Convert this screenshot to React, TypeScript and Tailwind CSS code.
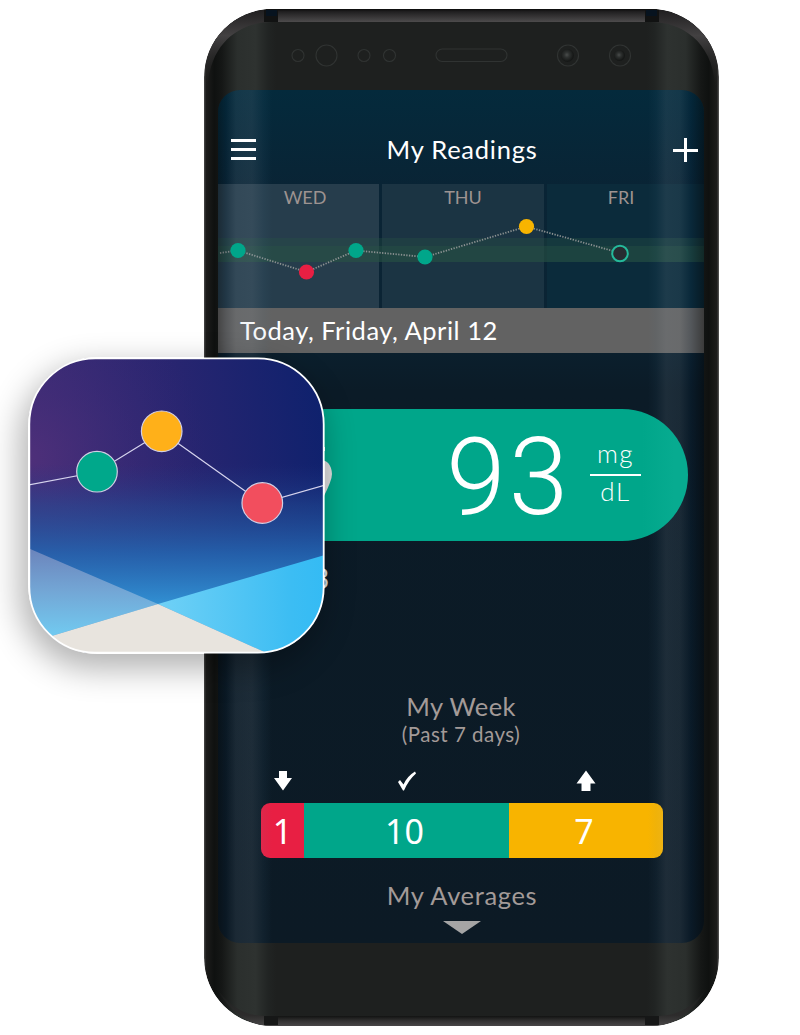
import React from "react";

const dots = [
  { x: 20, y: 66.5, fill: "#00a68a" },
  { x: 88.5, y: 88, fill: "#e81f43" },
  { x: 138, y: 66.5, fill: "#00a68a" },
  { x: 207, y: 73, fill: "#00a68a" },
  { x: 308.5, y: 42.5, fill: "#f8b400" },
];

function PhoneBody() {
  return (
    <svg className="absolute inset-0" width="515" height="1017" viewBox="0 0 515 1017" aria-hidden="true">
      <defs>
        <linearGradient id="side" x1="0" x2="1" y1="0" y2="0">
          <stop offset="0" stopColor="#4b4b4b" />
          <stop offset="0.004" stopColor="#1c1c1b" />
          <stop offset="0.02" stopColor="#0f1110" />
          <stop offset="0.035" stopColor="#151716" />
          <stop offset="0.065" stopColor="#2b2f2d" />
          <stop offset="0.1" stopColor="#2e3230" />
          <stop offset="0.125" stopColor="#212423" />
          <stop offset="0.14" stopColor="#1e201f" />
          <stop offset="0.86" stopColor="#1e201f" />
          <stop offset="0.875" stopColor="#212423" />
          <stop offset="0.9" stopColor="#2e3230" />
          <stop offset="0.935" stopColor="#2b2f2d" />
          <stop offset="0.965" stopColor="#151716" />
          <stop offset="0.98" stopColor="#0f1110" />
          <stop offset="0.996" stopColor="#1c1c1b" />
          <stop offset="1" stopColor="#5b5b5b" />
        </linearGradient>
        <linearGradient id="topEdge" x1="0" x2="0" y1="0" y2="1">
          <stop offset="0" stopColor="#0b0b0b" />
          <stop offset="0.2" stopColor="#201f20" />
          <stop offset="1" stopColor="#4d4b4c" />
        </linearGradient>
        <linearGradient id="cornerFade" x1="0" x2="0" y1="0" y2="1">
          <stop offset="0" stopColor="#1f1e1f" />
          <stop offset="0.35" stopColor="#434142" />
          <stop offset="1" stopColor="#2a2929" stopOpacity="0" />
        </linearGradient>
        <linearGradient id="bottomEdge" x1="0" x2="0" y1="0" y2="1">
          <stop offset="0" stopColor="#121312" />
          <stop offset="0.5" stopColor="#333232" />
          <stop offset="1" stopColor="#484647" />
        </linearGradient>
        <linearGradient id="bottomCorner" x1="0" x2="0" y1="0" y2="1">
          <stop offset="0" stopColor="#1c1c1c" stopOpacity="0" />
          <stop offset="0.75" stopColor="#2d2c2c" />
          <stop offset="1" stopColor="#484647" />
        </linearGradient>
        <radialGradient id="lens" cx="0.45" cy="0.45" r="0.5">
          <stop offset="0" stopColor="#4a4d4c" />
          <stop offset="0.4" stopColor="#2e3130" />
          <stop offset="1" stopColor="#161817" />
        </radialGradient>
      </defs>
      <rect width="515" height="1017" rx="68" fill="url(#side)" />
      <path d="M0 76V68A68 68 0 0 1 68 0V13C38 13 7 32 4 76Z" fill="url(#cornerFade)" />
      <path d="M515 76V68A68 68 0 0 0 447 0V13C477 13 508 32 511 76Z" fill="url(#cornerFade)" />
      <path d="M62 0H453V13H62Z" fill="url(#topEdge)" />
      <path d="M60 1L74 0V13H60Z" fill="#111212" />
      <path d="M441 0L455 1V13H441Z" fill="#111212" />
      <path d="M62 1H73V7H62ZM442 1H453V7H442Z" fill="#07131f" />
      <path d="M10 975C24 998 42 1007 62 1007V1017Q30 1013 10 975Z" fill="url(#bottomCorner)" />
      <path d="M505 975C491 998 473 1007 453 1007V1017Q485 1013 505 975Z" fill="url(#bottomCorner)" />
      <path d="M62 1007H453V1017H62Z" fill="url(#bottomEdge)" />
      <path d="M60 1007H74V1016H60ZM441 1007H455V1016H441Z" fill="#161717" />
      <g fill="none" stroke="#303332" strokeWidth="1.100">
        <circle cx="94" cy="46.500" r="6" />
        <circle cx="122.500" cy="46.500" r="10.500" />
        <circle cx="160" cy="46.500" r="6" />
        <circle cx="185.500" cy="46.500" r="6" />
        <rect x="232" y="40" width="71" height="12.500" rx="6.250" />
        <circle cx="364" cy="46.500" r="10.500" />
        <circle cx="416" cy="46.500" r="10.500" />
      </g>
      <circle cx="363.500" cy="46.500" r="6.500" fill="url(#lens)" />
      <circle cx="415.500" cy="46.500" r="5.500" fill="url(#lens)" />
    </svg>
  );
}

function Trend() {
  return (
    <div className="relative flex h-[124px] gap-[3px] text-[18px] leading-[27px] text-[#9d9391]">
      <div className="w-[161px] bg-[#263d4c] pl-[13px] text-center">WED</div>
      <div className="w-[162px] bg-[#1b3443] text-center">THU</div>
      <div className="w-[157px] bg-[#0b2b3b] pr-[9px] text-center">FRI</div>
      <svg className="absolute inset-0" width="486" height="124" viewBox="0 0 486 124">
        <path d="M0 54H486V62H0Z" fill="#285444" fillOpacity="0.35" />
        <path d="M0 62H486V78H0Z" fill="#285444" fillOpacity="0.6" />
        <polyline
          points="2,69 20,66.500 88.500,88 138,66.500 207,73 308.500,42.500 402,69"
          fill="none"
          stroke="#8b9191"
          strokeWidth="1.800"
          strokeDasharray="1.300 1.400"
        />
      </svg>
      <svg className="absolute inset-0 z-10" width="486" height="124" viewBox="0 0 486 124">
        {dots.map((d) => (
          <circle key={d.x} cx={d.x} cy={d.y} r="7.600" fill={d.fill} />
        ))}
        <circle cx="402" cy="69.500" r="7.800" fill="#272c31" stroke="#25b99b" strokeWidth="2" />
      </svg>
    </div>
  );
}

function AppIcon() {
  return (
    <div className="absolute top-[357px] left-[28px] h-[297px] w-[297px] rounded-[70px] shadow-[-5px_12px_32px_3px_rgba(0,0,0,0.3)]">
      <svg width="297" height="297" viewBox="0 0 297 297">
        <defs>
          <clipPath id="iconClip">
            <rect x="1" y="1" width="295" height="295" rx="66" />
          </clipPath>
          <linearGradient id="sky" x1="0" x2="0" y1="0" y2="1">
            <stop offset="0.36" stopColor="#23398a" stopOpacity="0" />
            <stop offset="0.5" stopColor="#23519b" stopOpacity="0.5" />
            <stop offset="0.66" stopColor="#2468b3" stopOpacity="0.85" />
            <stop offset="0.83" stopColor="#318fd2" />
          </linearGradient>
          <linearGradient id="night" x1="0" x2="1" y1="0.15" y2="0">
            <stop offset="0" stopColor="#3f2c74" />
            <stop offset="0.5" stopColor="#282570" />
            <stop offset="1" stopColor="#0d216d" />
          </linearGradient>
          <radialGradient id="violet" cx="0" cy="0.34" r="0.6">
            <stop offset="0" stopColor="#50307a" stopOpacity="0.9" />
            <stop offset="1" stopColor="#302877" stopOpacity="0" />
          </radialGradient>
          <linearGradient id="haze" x1="0" x2="0" y1="0" y2="1">
            <stop offset="0" stopColor="#6b83bb" />
            <stop offset="0.45" stopColor="#73a6d5" />
            <stop offset="1" stopColor="#71d0f5" />
          </linearGradient>
          <linearGradient id="ice" x1="0" x2="1" y1="0" y2="0">
            <stop offset="0" stopColor="#70d1f6" />
            <stop offset="0.8" stopColor="#3cbdf3" />
            <stop offset="1" stopColor="#34bbf4" />
          </linearGradient>
        </defs>
        <g clipPath="url(#iconClip)">
          <path d="M0 0H297V297H0Z" fill="url(#night)" />
          <path d="M0 0H297V297H0Z" fill="url(#violet)" />
          <path d="M0 0H297V297H0Z" fill="url(#sky)" />
          <path d="M0 191L130 247L20 280L0 286Z" fill="url(#haze)" />
          <path d="M130 247L297 198V297H241Z" fill="url(#ice)" />
          <path d="M0 286L130 247L241 297H0Z" fill="#e8e4de" />
          <polyline points="0,128 69,115 134,75 234,146 297,128" fill="none" stroke="#d5d3ed" strokeWidth="1.200" />
          <g stroke="#d2cfe4" strokeWidth="1.200">
            <circle cx="69" cy="114.700" r="20.300" fill="#00a88b" />
            <circle cx="133.700" cy="74.300" r="20.300" fill="#ffb019" />
            <circle cx="234.300" cy="146" r="20.300" fill="#f24e5e" />
          </g>
        </g>
        <rect x="1.300" y="1.300" width="294.400" height="294.400" rx="66" fill="none" stroke="#ffffff" strokeWidth="1.800" />
      </svg>
    </div>
  );
}

export default function App() {
  return (
    <div className="relative h-[1035px] w-[800px] overflow-hidden bg-white pt-[9px] pl-[204px] font-['Lato','Liberation_Sans',sans-serif]">
      <div className="relative isolate h-[1017px] w-[515px] overflow-hidden rounded-[68px] px-[14px] pt-[81px]">
        <PhoneBody />
        <div className="relative isolate flex h-[853px] w-[486px] flex-col overflow-hidden rounded-[22px] bg-[linear-gradient(180deg,#042a3c_0px,#092435_95px,#0b2434_218px,#0b1b27_300px,#0c1a25_853px)]">
          <header className="relative z-10 flex h-[94px] items-center pt-[25px] pr-[6px] pl-[13px] text-white">
            <svg width="26" height="24" viewBox="0 0 26 24" fill="#fff">
              <path d="M0 1H25V4H0ZM0 10H25V13H0ZM0 19H25V22H0Z" />
            </svg>
            <h1 className="flex-1 pr-[5px] pb-[2px] text-center text-[25.500px] leading-[32px] tracking-[0.750px] whitespace-nowrap">My Readings</h1>
            <svg width="26" height="26" viewBox="0 0 26 26" fill="#fff">
              <path d="M1 12H12V1H15V12H26V15H15V25H12V15H1Z" />
            </svg>
          </header>
          <Trend />
          <div className="h-[45px] bg-[#626262] pl-[22px] text-[25.500px] leading-[44px] tracking-[0.530px] whitespace-nowrap text-white">
            Today, Friday, April 12
          </div>
          <section className="relative z-10 mt-[56px] ml-[14px] flex h-[132px] w-[456px] items-center justify-end rounded-full bg-[linear-gradient(90deg,#00a68a_90%,#07ab90_97%)] pr-[47px] text-white">
            <div className="mr-[19px] pt-[6px] font-['Roboto','Liberation_Sans',sans-serif] text-[107px] leading-[120px] font-light tracking-[3px]">93</div>
            <div className="flex w-[51px] flex-col items-center text-[26px] leading-[28px] font-light tracking-[1.500px]">
              <span className="h-[35px]">mg</span>
              <span className="h-[2px] w-full bg-white" />
              <span className="h-[35px] pt-[1px]">dL</span>
            </div>
          </section>
          <section className="mt-[148px] flex flex-col items-center whitespace-nowrap text-[#a39a98]">
            <h2 className="h-[32px] text-[25.500px] leading-[34px] tracking-[0.400px]">My Week</h2>
            <p className="h-[28px] text-[20.500px] leading-[27px] tracking-[0.500px]">(Past 7 days)</p>
          </section>
          <div className="mt-[21px] ml-[43px] flex h-[33px] w-[402px]">
            <div className="flex w-[43px] justify-center">
              <svg width="20" height="22" viewBox="0 0 20 22" fill="#fff">
                <path d="M6 1H14V8H19L10 20.500L1 8H6Z" />
              </svg>
            </div>
            <div className="flex w-[205px] justify-center">
              <svg width="20" height="22" viewBox="0 0 20 22">
                <path d="M1 12L3 10L6.500 14.500C9 9 13 4.500 18 1.500L19 3.500C14 8 10 13.500 7 20.500H6Z" fill="#fff" />
              </svg>
            </div>
            <div className="flex w-[154px] justify-center">
              <svg width="20" height="22" viewBox="0 0 20 22" fill="#fff">
                <path d="M10 0.500L19.500 13.500H14.500V21H5.500V13.500H0.500Z" />
              </svg>
            </div>
          </div>
          <div className="ml-[43px] flex h-[55px] w-[402px] overflow-hidden rounded-[9px] text-center font-['Noto_Sans','Open_Sans',sans-serif] text-[34px] leading-[56px] text-white">
            <div className="w-[43px] bg-[#e81f43]">1</div>
            <div className="w-[205px] bg-[#00a68a] pr-[4px]">10</div>
            <div className="w-[154px] bg-[#f8b400] pr-[4px]">7</div>
          </div>
          <div className="mt-[22px] flex flex-col items-center pl-[2px] text-[#a39a98]">
            <h2 className="h-[40px] text-[25.500px] leading-[31px] tracking-[0.650px] whitespace-nowrap">My Averages</h2>
            <svg width="40" height="14" viewBox="0 0 40 14">
              <path d="M1 1H39L20 14Z" fill="#a5a5a5" />
            </svg>
          </div>
          <div className="pointer-events-none absolute inset-0 bg-[linear-gradient(90deg,rgba(0,0,0,.3)_0px,rgba(0,12,28,.12)_8px,rgba(160,175,190,.1)_18px,rgba(160,175,190,.12)_34px,rgba(90,140,170,.06)_46px,transparent_54px,transparent_430px,rgba(90,140,170,.05)_438px,rgba(160,175,190,.12)_448px,rgba(160,175,190,.1)_462px,rgba(0,25,50,.15)_473px,rgba(0,0,0,.4)_486px)]" />
        </div>
        <svg className="absolute top-[431px] left-[112px]" width="20" height="70" viewBox="0 0 20 70" fill="#dedede">
          <path d="M0 20Q15 18 16 34Q16 40 8 56H0ZM7 7H9V11H7Z" />
        </svg>
        <span className="absolute top-[552px] left-[109px] text-[28px] leading-[34px] text-[#dedede]">3</span>
      </div>
      <AppIcon />
    </div>
  );
}
